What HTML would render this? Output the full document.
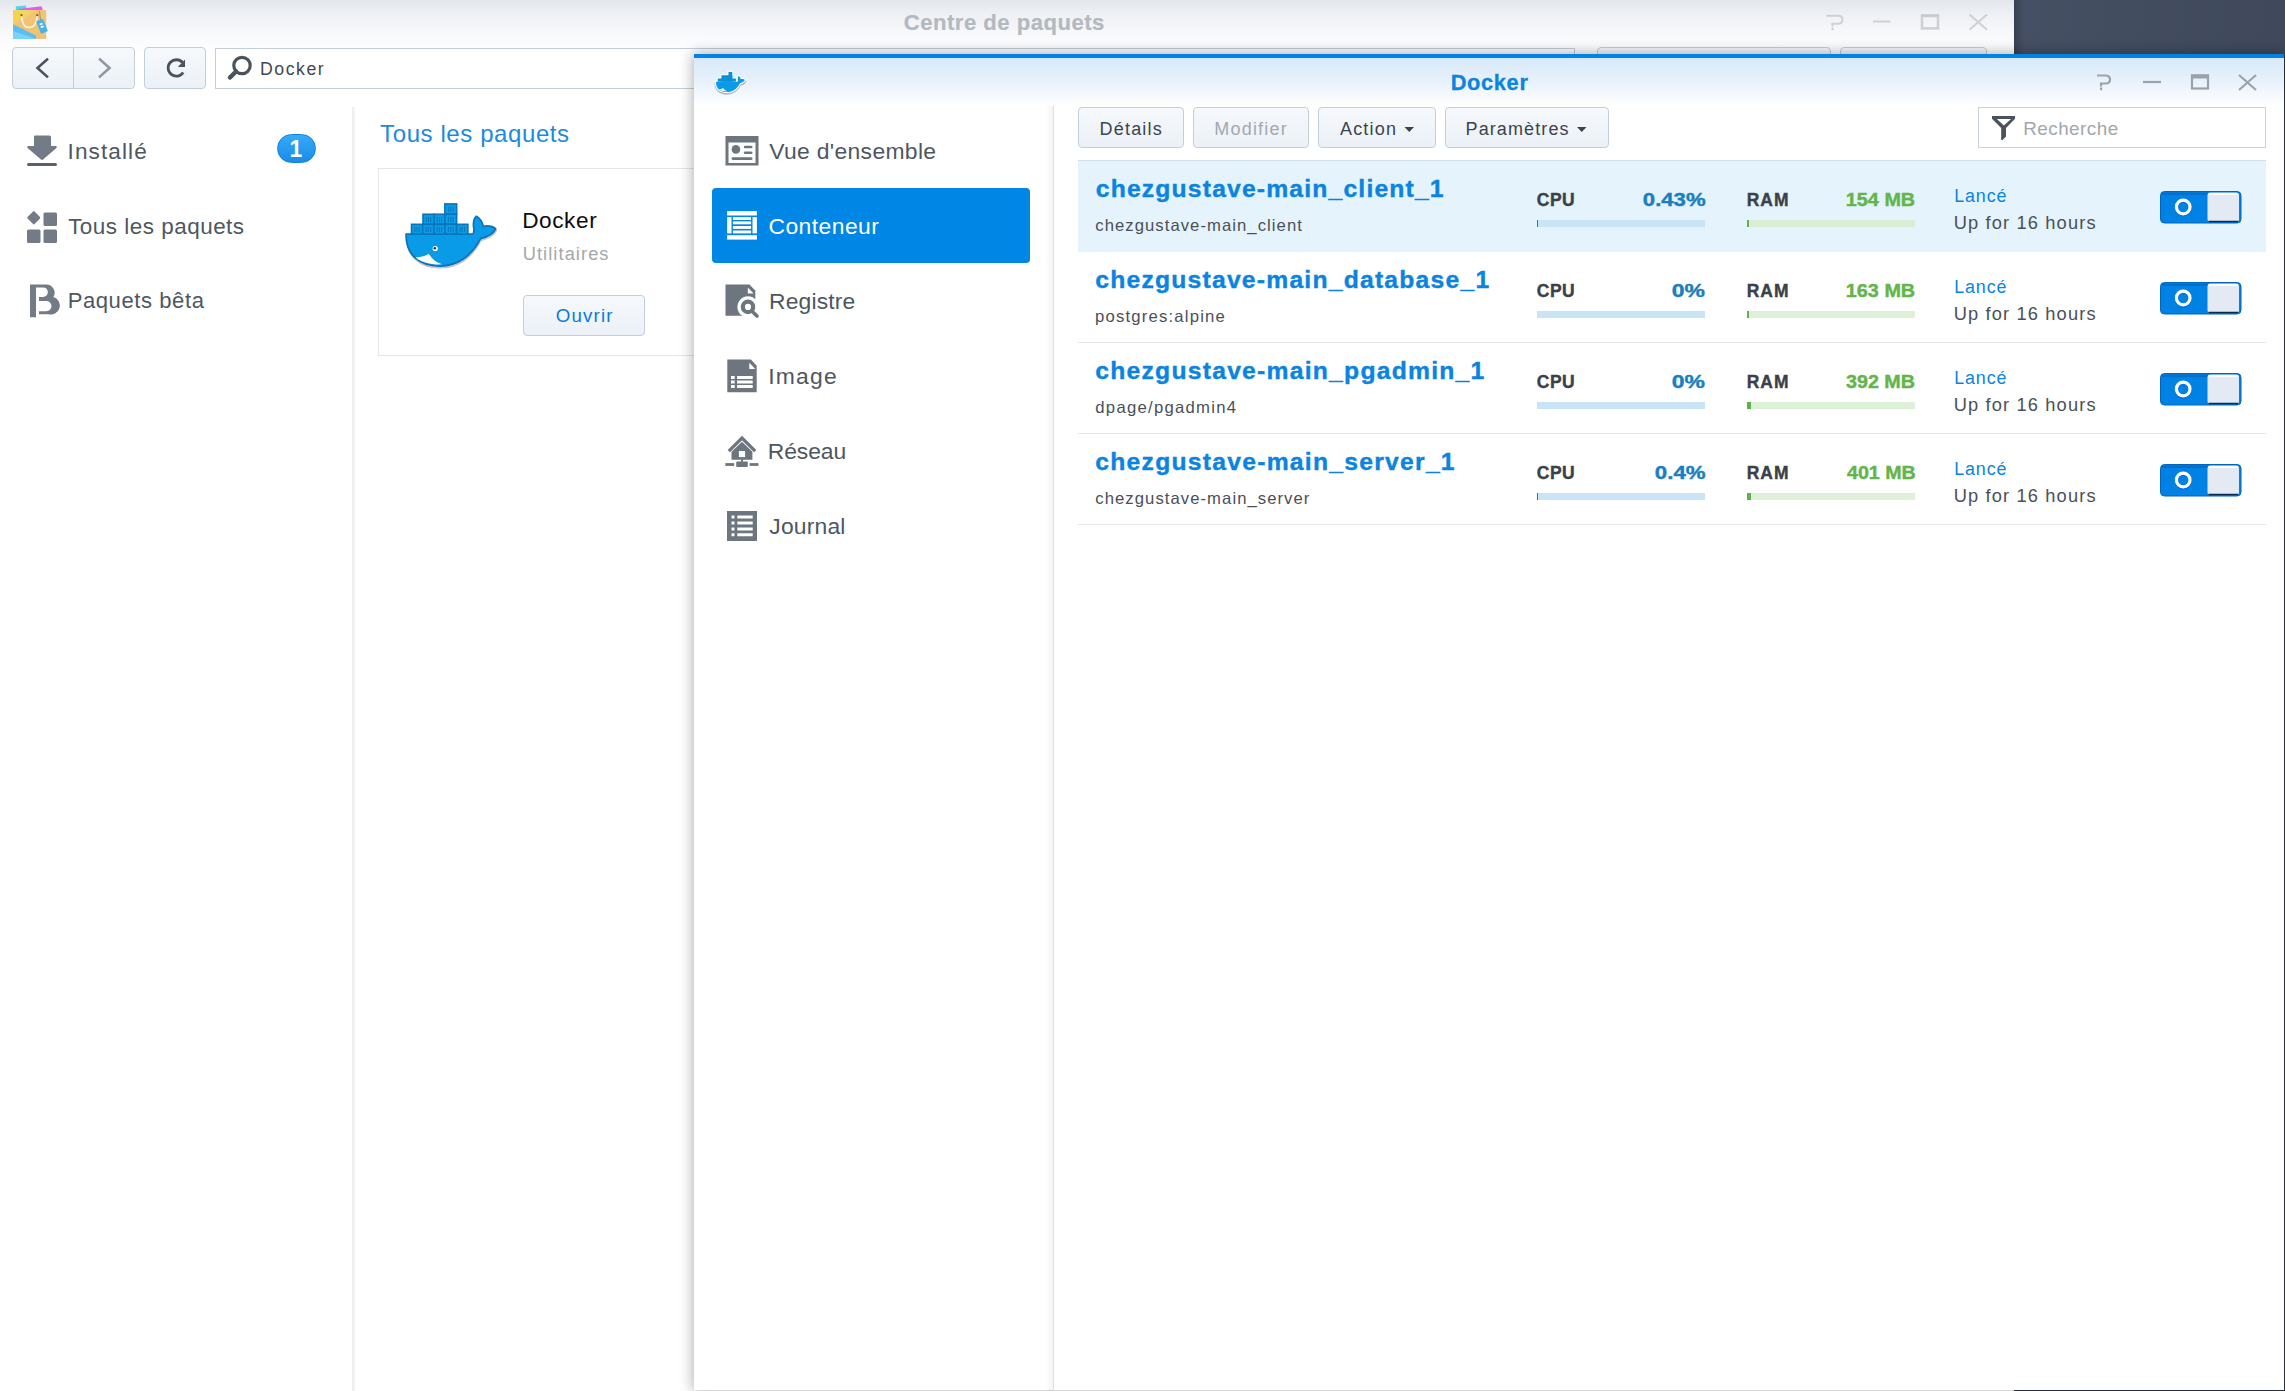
<!DOCTYPE html>
<html><head><meta charset="utf-8">
<style>
html,body{margin:0;padding:0;}
body{width:2285px;height:1391px;overflow:hidden;position:relative;background:#fff;font-family:"Liberation Sans",sans-serif;}
.a{position:absolute;}
.t{position:absolute;white-space:nowrap;line-height:1;}
.btn{position:absolute;box-sizing:border-box;border:1px solid #c3ced9;border-radius:4px;background:linear-gradient(#f6f9fc,#ebf1f7);}
svg{position:absolute;overflow:visible;}
</style></head><body>
<!-- ===== Background window: Centre de paquets ===== -->
<div class="a" style="left:0;top:0;width:2014px;height:56px;background:linear-gradient(#e3e7ec 0px,#eef0f4 14px,#f8f9fb 34px,#fdfdfe 46px,#fff 56px);"></div>
<div class="a" style="left:2014px;top:0;width:271px;height:54px;background:linear-gradient(90deg,#384150 0px,#465064 10px,#434d60 40%,#3f495b 100%);"></div>
<!-- app icon -->
<svg style="left:0;top:0" width="60" height="45" viewBox="0 0 60 45">
 <path d="M15.8 6.2 L26 5.6 L27 10.5 L15.8 10.8 Z" fill="#4fd6f2"/>
 <path d="M18.4 8.9 L41.5 6.3 L43 10.5 L18.4 11.2 Z" fill="#e25cf2"/>
 <rect x="13.1" y="10" width="33.1" height="28.9" rx="1.5" fill="#f0c375"/>
 <path d="M13.1 10 H30 L13.1 25 Z" fill="#f4d34f"/>
 <path d="M20 10 H36 L22 21 Z" fill="#f6d866" opacity="0.6"/>
 <path d="M13.1 24.2 L36 35.5 L36 38.9 H13.1 Z" fill="#5bbdf0"/>
 <path d="M13.1 31 L36 38.9 H13.1 Z" fill="#7cd2f6"/>
 <path d="M36 33 L46.2 36 V38.9 H36 Z" fill="#ecc27e"/>
 <path d="M21.5 15.2 Q22 27.5 29 27.5 Q36.5 27.5 37.3 15.2" stroke="#fbf3df" stroke-width="1.5" fill="none"/>
 <circle cx="21.5" cy="15.2" r="1.1" fill="#6d5a45"/><circle cx="37.2" cy="15.2" r="1.1" fill="#6d5a45"/>
 <path d="M39.5 11 L40.5 20" stroke="#8a7a60" stroke-width="0.7"/>
 <g transform="rotate(-22 42 26.3)"><rect x="38.3" y="19.5" width="7.4" height="13.6" rx="1" fill="#48b4ea"/><rect x="40.5" y="23" width="3" height="1.6" fill="#fff"/><rect x="40.5" y="26" width="3" height="1.6" fill="#fff"/></g>
</svg>
<div class="t" style="display:none"></div>
<!-- window controls bg -->
<svg style="left:1820px;top:10px" width="180" height="24" viewBox="0 0 180 24">
 <g fill="none" stroke="#cdd1d6" stroke-width="2">
  <path d="M6.5 5.7 H18 Q22.5 5.7 22.5 9.8 Q22.5 13.8 18 13.8 H12.5 V16.5"/>
  <path d="M53 11.5 H70.5"/>
  <rect x="102" y="6" width="16" height="12.4" stroke-width="2.6"/>
  <path d="M149.5 4.5 L167 19.8 M167 4.5 L149.5 19.8"/>
 </g>
 <rect x="11.5" y="17.5" width="2.2" height="2.7" fill="#cdd1d6"/>
 <rect x="101" y="4.2" width="18" height="2.3" fill="#c6cbd0"/>
</svg>
<!-- nav buttons -->
<div class="btn" style="left:12px;top:47px;width:123px;height:42px;"></div>
<div class="a" style="left:73px;top:48px;width:1px;height:40px;background:#c3ced9;"></div>
<div class="btn" style="left:144px;top:47px;width:62px;height:42px;"></div>
<svg style="left:0;top:40px" width="220" height="60" viewBox="0 0 220 60">
 <path d="M47 19.5 L37.5 28 L47 36.5" fill="none" stroke="#4a535c" stroke-width="2.6" stroke-linecap="square"/>
 <path d="M100 19.5 L109.5 28 L100 36.5" fill="none" stroke="#8e979f" stroke-width="2.6" stroke-linecap="square"/>
 <path d="M182.5 22.5 A8.2 8.2 0 1 0 183.2 32.5" fill="none" stroke="#4a535c" stroke-width="2.8"/>
 <path d="M185 19.5 L185 27 L177.8 27 Z" fill="#4a535c"/>
</svg>
<!-- search field -->
<div class="a" style="left:215px;top:48px;width:1360px;height:41px;box-sizing:border-box;border:1px solid #c3ced9;background:#fff;"></div>
<svg style="left:210px;top:40px" width="60" height="60" viewBox="0 0 60 60">
 <circle cx="32" cy="25.5" r="8.2" fill="none" stroke="#4a535c" stroke-width="3.2"/>
 <path d="M26 31.5 L20 37.5" stroke="#4a535c" stroke-width="4.5" stroke-linecap="round"/>
</svg>
<!-- hidden toolbar buttons (tops visible) -->
<div class="btn" style="left:1597px;top:47px;width:234px;height:42px;"></div>
<div class="btn" style="left:1840px;top:47px;width:147px;height:42px;"></div>
<!-- sidebar icons -->
<svg style="left:20px;top:125px" width="45" height="200" viewBox="0 0 45 200">
 <g fill="#737c86">
  <path d="M14 11.5 Q14 10.5 15 10.5 L29.5 10.5 Q31 10.5 31 12 L31 21 L36 21 Q37.5 21.5 36.5 23 L23 34.5 Q22 35.3 21 34.5 L7.5 23 Q6.5 21.5 8 21 L14 21 Z"/>
  <rect x="7" y="38" width="30" height="3" rx="1.5" fill="#59616b"/>
  <path d="M13.3 86.2 Q13.8 85.7 14.3 86.2 L20 92 Q20.6 92.7 20 93.4 L14.3 99.2 Q13.8 99.7 13.3 99.2 L7.5 93.4 Q6.9 92.7 7.5 92 Z"/>
  <rect x="23.5" y="87.5" width="13.5" height="13.5" rx="1.5"/>
  <rect x="7" y="104.5" width="13.5" height="13.5" rx="1.5"/>
  <rect x="23.5" y="104.5" width="13.5" height="13.5" rx="1.5"/>
  <path fill-rule="evenodd" d="M10 159.6 H25.8 A8.2 8.2 0 0 1 33.4 172 A8.75 8.75 0 0 1 28.25 189.2 H19 V186.2 H26.4 A5.1 5.1 0 0 0 26.4 176 H19 V172 H16 V192.3 H10 Z M16 162.4 V172 H23.05 A4.8 4.8 0 0 0 23.05 162.4 Z"/>
 </g>
</svg>
<div class="a" style="left:277px;top:134px;width:39px;height:29px;box-sizing:border-box;border:1px solid #1282de;border-radius:15px;background:linear-gradient(#37a9f8,#1a8ce7);"></div>
<div class="t" style="left:276.5px;width:39px;text-align:center;top:136px;line-height:26px;font-size:23px;font-weight:bold;color:#fff;">1</div>
<!-- divider -->
<div class="a" style="left:352px;top:107px;width:3px;height:1284px;background:linear-gradient(90deg,#e9ebed,#f6f7f8);"></div>
<!-- card -->
<div class="a" style="left:378px;top:168px;width:330px;height:188px;box-sizing:border-box;border:1px solid #e3e7eb;background:#fff;"></div>
<svg id="whale1" style="left:400px;top:195px" width="100" height="80" viewBox="0 0 1739 1391">
 <path d="M105,680 L1250,680 C1300,670 1290,620 1280,560 C1270,470 1290,400 1330,370 C1400,420 1440,490 1445,545 C1530,530 1620,550 1665,590 C1610,700 1480,740 1400,760 C1250,1060 1000,1230 700,1235 C350,1240 100,1050 105,680 Z" transform="translate(8,30)" fill="#000" opacity="0.22" stroke="#000" stroke-width="30"/>
 <g filter="">
 <path d="M105,680 L1250,680 C1300,670 1290,620 1280,560 C1270,470 1290,400 1330,370 C1400,420 1440,490 1445,545 C1530,530 1620,550 1665,590 C1610,700 1480,740 1400,760 C1250,1060 1000,1230 700,1235 C350,1240 100,1050 105,680 Z" fill="#0a9be8" stroke="#0b74b8" stroke-width="30" stroke-linejoin="round"/>
 <path d="M270,1085 C380,1080 460,1060 500,1020 C560,1120 640,1180 730,1205 C560,1215 380,1175 270,1085 Z" fill="#fff"/>
 <circle cx="612" cy="930" r="45" fill="#fff"/><circle cx="605" cy="925" r="22" fill="#333"/>
 <g fill="#0a9be8" stroke="#0b74b8" stroke-width="28">
  <rect x="780" y="155" width="205" height="178"/>
  <rect x="400" y="335" width="190" height="172"/><rect x="590" y="335" width="190" height="172"/><rect x="780" y="335" width="205" height="172"/>
  <rect x="200" y="510" width="195" height="170"/><rect x="395" y="510" width="195" height="170"/><rect x="590" y="510" width="190" height="170"/><rect x="780" y="510" width="205" height="170"/><rect x="985" y="510" width="195" height="170"/>
 </g>
 <path d="M842 205V294M882 205V294M924 205V294M457 383V469M495 383V469M533 383V469M647 383V469M685 383V469M723 383V469M842 383V469M882 383V469M924 383V469M258 558V643M298 558V643M336 558V643M454 558V643M492 558V643M532 558V643M647 558V643M685 558V643M723 558V643M842 558V643M882 558V643M924 558V643M1044 558V643M1082 558V643M1122 558V643" stroke="#0b6aa8" stroke-width="18" opacity="0.75"/>
 </g>
</svg>
<div class="btn" style="left:523px;top:295px;width:122px;height:41px;"></div>

<!-- ===== Docker window ===== -->
<div class="a" style="left:2014px;top:1390px;width:271px;height:1px;background:#2f3846;"></div>
<div class="a" style="left:2284px;top:54px;width:1px;height:1337px;background:#2f3846;"></div>
<div class="a" style="left:694px;top:54px;width:1590px;height:1336px;background:#fff;box-shadow:0 0 13px 1px rgba(0,0,0,0.32);"></div>
<div class="a" style="left:694px;top:54px;width:1590px;height:4px;background:#0082e6;"></div>
<div class="a" style="left:694px;top:58px;width:1590px;height:48px;background:linear-gradient(#d7e9f9,#e6f1fb 45%,#fafcfe 90%,#fff);"></div>
<svg style="left:713.5px;top:68.7px" width="32.3" height="25.9" viewBox="0 0 1739 1391">
 <path d="M105,680 L1250,680 C1300,670 1290,620 1280,560 C1270,470 1290,400 1330,370 C1400,420 1440,490 1445,545 C1530,530 1620,550 1665,590 C1610,700 1480,740 1400,760 C1250,1060 1000,1230 700,1235 C350,1240 100,1050 105,680 Z" transform="translate(0,70)" fill="#000" opacity="0.25" stroke="#000" stroke-width="150" stroke-linejoin="round"/>
 <path d="M105,680 L1250,680 C1300,670 1290,620 1280,560 C1270,470 1290,400 1330,370 C1400,420 1440,490 1445,545 C1530,530 1620,550 1665,590 C1610,700 1480,740 1400,760 C1250,1060 1000,1230 700,1235 C350,1240 100,1050 105,680 Z" fill="#fff" stroke="#fff" stroke-width="120" stroke-linejoin="round"/>
 <g fill="#fff" stroke="#fff" stroke-width="120"><rect x="780" y="155" width="205" height="520"/><rect x="400" y="335" width="585" height="340"/><rect x="200" y="510" width="980" height="170"/></g>
 <path d="M105,680 L1250,680 C1300,670 1290,620 1280,560 C1270,470 1290,400 1330,370 C1400,420 1440,490 1445,545 C1530,530 1620,550 1665,590 C1610,700 1480,740 1400,760 C1250,1060 1000,1230 700,1235 C350,1240 100,1050 105,680 Z" fill="#0a9be8"/>
 <path d="M270,1085 C380,1080 460,1060 500,1020 C560,1120 640,1180 730,1205 C560,1215 380,1175 270,1085 Z" fill="#fff"/>
 <g fill="#0a8fd8"><rect x="780" y="155" width="205" height="525"/><rect x="400" y="335" width="585" height="345"/><rect x="200" y="510" width="980" height="170"/></g>
</svg>
<!-- window controls docker -->
<svg style="left:2090px;top:68px" width="180" height="28" viewBox="0 0 180 28">
 <g fill="none" stroke="#9aa3ab" stroke-width="2.2">
  <path d="M7 7.5 H15.5 Q20 7.5 20 11.5 Q20 15.5 15.5 15.5 H11 V18.5"/>
  <path d="M53 14 H71"/>
  <rect x="102" y="7.5" width="16" height="13"/>
  <path d="M149 7 L166 22 M166 7 L149 22"/>
 </g>
 <rect x="10" y="19.5" width="2.2" height="2.8" fill="#9aa3ab"/>
 <rect x="101" y="6.5" width="18" height="4" fill="#9aa3ab"/>
</svg>
<!-- docker sidebar -->
<div class="a" style="left:1045px;top:106px;width:8px;height:1285px;background:linear-gradient(90deg,rgba(0,0,0,0),rgba(0,0,0,0.045));"></div><div class="a" style="left:1053px;top:106px;width:1px;height:1285px;background:#dde1e5;"></div>
<div class="a" style="left:712px;top:188px;width:318px;height:75px;border-radius:4px;background:#0086e4;"></div>
<svg style="left:715px;top:125px" width="60" height="430" viewBox="0 0 60 430">
 <g fill="#6d757e">
  <!-- vue d'ensemble -->
  <path fill-rule="evenodd" d="M10.5 11 H43.5 V40.5 H10.5 Z M13.5 17.5 V38 H40.5 V17.5 Z"/>
  <circle cx="20.9" cy="24.4" r="4.3"/>
  <rect x="28.8" y="20.7" width="8.7" height="2.6" rx="1.3"/>
  <rect x="28.8" y="26.4" width="8.7" height="2.6" rx="1.3"/>
  <rect x="16.5" y="32.3" width="21" height="2.6" rx="1.3"/>
  <!-- registre -->
  <path d="M10.5 159.5 H34.4 L40.3 165.4 V190.7 H10.5 Z"/>
  <path d="M32.8 162.4 L38.6 168.6 H32.8 Z" fill="#fff"/>
  <circle cx="33" cy="181.9" r="10.6" fill="#fff"/>
  <circle cx="33" cy="181.9" r="5.2" fill="none" stroke="#6d757e" stroke-width="4.2"/>
  <path d="M36.8 186 L42 191" stroke="#6d757e" stroke-width="3.6" stroke-linecap="round"/>
  <!-- image -->
  <path fill-rule="evenodd" d="M12.3 234.5 H35.9 L41.7 240.8 V267.3 H12.3 Z M16 251 V253.9 H19.7 V251 Z M22.1 251 V253.9 H37.7 V251 Z M16 255.5 V258.4 H19.7 V255.5 Z M22.1 255.5 V258.4 H37.7 V255.5 Z M16 260 V262.9 H19.7 V260 Z M22.1 260 V262.9 H37.7 V260 Z"/>
  <path d="M34.3 237.7 L40.3 243.9 H34.3 Z" fill="#fff"/>
  <!-- reseau -->
  <path d="M13.8 326.2 L27 313 L40.2 326.2" fill="none" stroke="#6d757e" stroke-width="3.2" stroke-linejoin="miter"/>
  <path d="M27 316.7 L37.4 326.8 V334.7 H16.5 V326.8 Z"/>
  <rect x="23.9" y="326" width="6.2" height="6.1" fill="#fff"/>
  <rect x="26" y="334.5" width="2" height="2.3"/>
  <rect x="21.2" y="336.5" width="11.6" height="5.6" rx="1"/>
  <rect x="10.3" y="338.1" width="8.9" height="2.8"/><rect x="34.6" y="338.1" width="8.9" height="2.8"/>
  <!-- journal -->
  <path fill-rule="evenodd" d="M12 386 H42 V416 H12 Z M16.5 390.5 V393.5 H19.5 V390.5 Z M22.3 390.5 V393.5 H37.7 V390.5 Z M16.5 396.5 V399.5 H19.5 V396.5 Z M22.3 396.5 V399.5 H37.7 V396.5 Z M16.5 402.5 V405.5 H19.5 V402.5 Z M22.3 402.5 V405.5 H37.7 V402.5 Z M16.5 408.3 V411.3 H19.5 V408.3 Z M22.3 408.3 V411.3 H37.7 V408.3 Z"/>
 </g>
 <!-- conteneur (white) -->
 <g fill="#fff">
  <rect x="12.1" y="86.1" width="29.8" height="4.4"/>
  <rect x="12.1" y="110.2" width="29.8" height="4.4"/>
  <rect x="12.1" y="92.1" width="4.4" height="16.3"/>
  <rect x="37.5" y="92.1" width="4.4" height="16.3"/>
  <rect x="17.9" y="92.1" width="18.2" height="2.9"/>
  <rect x="17.9" y="96.4" width="18.2" height="2.9"/>
  <rect x="17.9" y="101" width="18.2" height="2.9"/>
  <rect x="17.9" y="105.5" width="18.2" height="2.9"/>
 </g>
</svg>
<!-- toolbar -->
<div class="btn" style="left:1078px;top:107px;width:106px;height:41px;"></div>
<div class="btn" style="left:1193px;top:107px;width:116px;height:41px;"></div>
<div class="btn" style="left:1318px;top:107px;width:118px;height:41px;"></div>
<div class="btn" style="left:1445px;top:107px;width:164px;height:41px;"></div>
<svg style="left:1400px;top:120px" width="200" height="20" viewBox="0 0 200 20">
 <path d="M4.5 7 H14 L9.25 12 Z" fill="#3b444d"/>
 <path d="M177 7 H186.5 L181.75 12 Z" fill="#3b444d"/>
</svg>
<div class="a" style="left:1978px;top:107px;width:288px;height:41px;box-sizing:border-box;border:1px solid #c9d3dc;background:#fff;"></div>
<svg style="left:1985px;top:110px" width="30" height="35" viewBox="0 0 30 35">
 <path fill-rule="evenodd" d="M7 6 H30 V8.8 L21 18 V26.5 L17.5 30 H16.2 V18 L7 8.8 Z M11.8 9 H26 L18.9 15.5 Z" fill="#4a535c"/>
</svg>
<!-- rows -->
<div class="a" style="left:1078px;top:160px;width:1188px;height:1px;background:#d5dde6;"></div>
<div class="a" style="left:1078px;top:161px;width:1188px;height:91px;background:#e5f3fd;"></div>
<div class="a" style="left:1078px;top:342px;width:1188px;height:1px;background:#e5e9ee;"></div>
<div class="a" style="left:1078px;top:433px;width:1188px;height:1px;background:#e5e9ee;"></div>
<div class="a" style="left:1078px;top:524px;width:1188px;height:1px;background:#e5e9ee;"></div>
<!-- bars -->
<div class="a" style="left:1537px;top:220px;width:168px;height:7px;background:#c9e3f7;"></div>
<div class="a" style="left:1537px;top:220px;width:1px;height:7px;background:#1b7fbf;"></div>
<div class="a" style="left:1747px;top:220px;width:168px;height:7px;background:#dbeed5;"></div>
<div class="a" style="left:1747px;top:220px;width:2px;height:7px;background:#5cb34a;"></div>
<div class="a" style="left:1537px;top:311px;width:168px;height:7px;background:#c9e3f7;"></div>
<div class="a" style="left:1747px;top:311px;width:168px;height:7px;background:#dff0d9;"></div>
<div class="a" style="left:1747px;top:311px;width:2px;height:7px;background:#5cb34a;"></div>
<div class="a" style="left:1537px;top:402px;width:168px;height:7px;background:#c9e3f7;"></div>
<div class="a" style="left:1747px;top:402px;width:168px;height:7px;background:#dff0d9;"></div>
<div class="a" style="left:1747px;top:402px;width:4px;height:7px;background:#5cb34a;"></div>
<div class="a" style="left:1537px;top:493px;width:168px;height:7px;background:#c9e3f7;"></div>
<div class="a" style="left:1537px;top:493px;width:1px;height:7px;background:#1b7fbf;"></div>
<div class="a" style="left:1747px;top:493px;width:168px;height:7px;background:#dff0d9;"></div>
<div class="a" style="left:1747px;top:493px;width:4px;height:7px;background:#5cb34a;"></div>
<!-- toggles -->
<svg style="left:2160px;top:191px" width="82" height="33" viewBox="0 0 82 33"><rect x="0.5" y="0.5" width="80.5" height="31.5" rx="4" fill="#0082e4" stroke="#0066bf"/><path d="M2 3 Q2 1.5 4 1.5 H48 V4 H2 Z" fill="#0068c4" opacity="0.7"/><circle cx="23.2" cy="17" r="6.8" fill="none" stroke="#0a4fd8" stroke-width="3.2" opacity="0.5"/><circle cx="23.2" cy="16" r="6.8" fill="none" stroke="#fff" stroke-width="3.2"/><rect x="47.5" y="1.5" width="31.5" height="29.5" rx="3" fill="#e3eaf3"/><path d="M48.5 3 H78" stroke="#fff" stroke-width="2"/><path d="M48.5 30.5 H78" stroke="#0a2a50" stroke-width="1.5"/></svg>
<svg style="left:2160px;top:282px" width="82" height="33" viewBox="0 0 82 33"><rect x="0.5" y="0.5" width="80.5" height="31.5" rx="4" fill="#0082e4" stroke="#0066bf"/><path d="M2 3 Q2 1.5 4 1.5 H48 V4 H2 Z" fill="#0068c4" opacity="0.7"/><circle cx="23.2" cy="17" r="6.8" fill="none" stroke="#0a4fd8" stroke-width="3.2" opacity="0.5"/><circle cx="23.2" cy="16" r="6.8" fill="none" stroke="#fff" stroke-width="3.2"/><rect x="47.5" y="1.5" width="31.5" height="29.5" rx="3" fill="#e3eaf3"/><path d="M48.5 3 H78" stroke="#fff" stroke-width="2"/><path d="M48.5 30.5 H78" stroke="#0a2a50" stroke-width="1.5"/></svg>
<svg style="left:2160px;top:373px" width="82" height="33" viewBox="0 0 82 33"><rect x="0.5" y="0.5" width="80.5" height="31.5" rx="4" fill="#0082e4" stroke="#0066bf"/><path d="M2 3 Q2 1.5 4 1.5 H48 V4 H2 Z" fill="#0068c4" opacity="0.7"/><circle cx="23.2" cy="17" r="6.8" fill="none" stroke="#0a4fd8" stroke-width="3.2" opacity="0.5"/><circle cx="23.2" cy="16" r="6.8" fill="none" stroke="#fff" stroke-width="3.2"/><rect x="47.5" y="1.5" width="31.5" height="29.5" rx="3" fill="#e3eaf3"/><path d="M48.5 3 H78" stroke="#fff" stroke-width="2"/><path d="M48.5 30.5 H78" stroke="#0a2a50" stroke-width="1.5"/></svg>
<svg style="left:2160px;top:464px" width="82" height="33" viewBox="0 0 82 33"><rect x="0.5" y="0.5" width="80.5" height="31.5" rx="4" fill="#0082e4" stroke="#0066bf"/><path d="M2 3 Q2 1.5 4 1.5 H48 V4 H2 Z" fill="#0068c4" opacity="0.7"/><circle cx="23.2" cy="17" r="6.8" fill="none" stroke="#0a4fd8" stroke-width="3.2" opacity="0.5"/><circle cx="23.2" cy="16" r="6.8" fill="none" stroke="#fff" stroke-width="3.2"/><rect x="47.5" y="1.5" width="31.5" height="29.5" rx="3" fill="#e3eaf3"/><path d="M48.5 3 H78" stroke="#fff" stroke-width="2"/><path d="M48.5 30.5 H78" stroke="#0a2a50" stroke-width="1.5"/></svg>
<div class="t" style="left:903.72px;top:10px;line-height:25px;font-size:22.09px;letter-spacing:0.503px;color:#b3b9c0;font-weight:bold;-webkit-text-stroke-width:0.2px;">Centre de paquets</div>
<div class="t" style="left:260.08px;top:59px;line-height:20px;font-size:17.72px;letter-spacing:1.503px;color:#3f4851;">Docker</div>
<div class="t" style="left:67.57px;top:139px;line-height:25px;font-size:22.60px;letter-spacing:1.090px;color:#4e5761;">Installé</div>
<div class="t" style="left:68.15px;top:214px;line-height:25px;font-size:22.47px;letter-spacing:0.488px;color:#4e5761;">Tous les paquets</div>
<div class="t" style="left:67.64px;top:288px;line-height:25px;font-size:22.05px;letter-spacing:0.577px;color:#4e5761;">Paquets bêta</div>
<div class="t" style="left:380.12px;top:120px;line-height:27px;font-size:24.00px;letter-spacing:0.592px;color:#1a8ae0;">Tous les paquets</div>
<div class="t" style="left:522.19px;top:208px;line-height:25px;font-size:22.60px;letter-spacing:0.581px;color:#0d0d0d;">Docker</div>
<div class="t" style="left:522.72px;top:243px;line-height:21px;font-size:18.28px;letter-spacing:1.067px;color:#a3a8ad;">Utilitaires</div>
<div class="t" style="left:555.85px;top:305px;line-height:21px;font-size:18.70px;letter-spacing:1.159px;color:#0a7bd6;">Ouvrir</div>
<div class="t" style="left:1450.69px;top:70px;line-height:25px;font-size:21.80px;letter-spacing:0.657px;color:#0a84e0;font-weight:bold;-webkit-text-stroke-width:0.3px;">Docker</div>
<div class="t" style="left:769.20px;top:138px;line-height:26px;font-size:22.88px;letter-spacing:0.337px;color:#4e5761;">Vue d&#39;ensemble</div>
<div class="t" style="left:768.46px;top:213px;line-height:26px;font-size:22.88px;letter-spacing:0.447px;color:#ffffff;">Conteneur</div>
<div class="t" style="left:768.97px;top:288px;line-height:26px;font-size:22.88px;letter-spacing:0.164px;color:#4e5761;">Registre</div>
<div class="t" style="left:768.14px;top:363px;line-height:26px;font-size:22.88px;letter-spacing:1.272px;color:#4e5761;">Image</div>
<div class="t" style="left:767.77px;top:438px;line-height:26px;font-size:22.88px;letter-spacing:-0.086px;color:#4e5761;">Réseau</div>
<div class="t" style="left:769.37px;top:513px;line-height:26px;font-size:22.88px;letter-spacing:0.166px;color:#4e5761;">Journal</div>
<div class="t" style="left:1099.56px;top:119px;line-height:20px;font-size:18.00px;letter-spacing:1.193px;color:#3b444d;">Détails</div>
<div class="t" style="left:1214.16px;top:119px;line-height:20px;font-size:18.00px;letter-spacing:1.236px;color:#a2a9b1;">Modifier</div>
<div class="t" style="left:1340.00px;top:119px;line-height:20px;font-size:18.00px;letter-spacing:1.177px;color:#3b444d;">Action</div>
<div class="t" style="left:1465.56px;top:119px;line-height:20px;font-size:18.00px;letter-spacing:1.105px;color:#3b444d;">Paramètres</div>
<div class="t" style="left:2023.19px;top:118px;line-height:21px;font-size:18.84px;letter-spacing:0.487px;color:#a1a7ae;">Recherche</div>
<div class="t" style="left:1095.76px;top:175px;line-height:27px;font-size:24.69px;letter-spacing:1.173px;color:#0a84e0;font-weight:bold;-webkit-text-stroke-width:0.4px;">chezgustave-main_client_1</div>
<div class="t" style="left:1095.33px;top:216px;line-height:19px;font-size:16.68px;letter-spacing:1.046px;color:#4a5058;">chezgustave-main_client</div>
<div class="t" style="left:1536.80px;top:190px;line-height:20px;font-size:17.44px;letter-spacing:0.541px;color:#3a414a;font-weight:bold;-webkit-text-stroke-width:0.4px;">CPU</div>
<div class="t" style="left:1642.88px;top:190px;line-height:20px;font-size:17.44px;letter-spacing:0.000px;color:#1b7fbf;font-weight:bold;-webkit-text-stroke-width:0.4px;transform:scaleX(1.2675);transform-origin:0.52px 0;">0.43%</div>
<div class="t" style="left:1746.65px;top:190px;line-height:20px;font-size:17.44px;letter-spacing:1.062px;color:#3a414a;font-weight:bold;-webkit-text-stroke-width:0.4px;">RAM</div>
<div class="t" style="left:1846.35px;top:190px;line-height:20px;font-size:17.44px;letter-spacing:0.000px;color:#63b54b;font-weight:bold;-webkit-text-stroke-width:0.4px;transform:scaleX(1.1351);transform-origin:1.05px 0;">154 MB</div>
<div class="t" style="left:1954.17px;top:186px;line-height:20px;font-size:17.86px;letter-spacing:0.903px;color:#0a84e0;">Lancé</div>
<div class="t" style="left:1953.72px;top:212px;line-height:21px;font-size:18.28px;letter-spacing:1.138px;color:#4a5058;">Up for 16 hours</div>
<div class="t" style="left:1095.26px;top:266px;line-height:27px;font-size:24.69px;letter-spacing:1.216px;color:#0a84e0;font-weight:bold;-webkit-text-stroke-width:0.4px;">chezgustave-main_database_1</div>
<div class="t" style="left:1095.00px;top:307px;line-height:19px;font-size:16.68px;letter-spacing:1.196px;color:#4a5058;">postgres:alpine</div>
<div class="t" style="left:1536.80px;top:281px;line-height:20px;font-size:17.44px;letter-spacing:0.541px;color:#3a414a;font-weight:bold;-webkit-text-stroke-width:0.4px;">CPU</div>
<div class="t" style="left:1672.48px;top:281px;line-height:20px;font-size:17.44px;letter-spacing:0.000px;color:#1b7fbf;font-weight:bold;-webkit-text-stroke-width:0.4px;transform:scaleX(1.3141);transform-origin:0.52px 0;">0%</div>
<div class="t" style="left:1746.65px;top:281px;line-height:20px;font-size:17.44px;letter-spacing:1.062px;color:#3a414a;font-weight:bold;-webkit-text-stroke-width:0.4px;">RAM</div>
<div class="t" style="left:1846.25px;top:281px;line-height:20px;font-size:17.44px;letter-spacing:0.000px;color:#63b54b;font-weight:bold;-webkit-text-stroke-width:0.4px;transform:scaleX(1.1351);transform-origin:1.05px 0;">163 MB</div>
<div class="t" style="left:1954.17px;top:277px;line-height:20px;font-size:17.86px;letter-spacing:0.903px;color:#0a84e0;">Lancé</div>
<div class="t" style="left:1953.72px;top:303px;line-height:21px;font-size:18.28px;letter-spacing:1.138px;color:#4a5058;">Up for 16 hours</div>
<div class="t" style="left:1095.26px;top:357px;line-height:27px;font-size:24.69px;letter-spacing:1.239px;color:#0a84e0;font-weight:bold;-webkit-text-stroke-width:0.4px;">chezgustave-main_pgadmin_1</div>
<div class="t" style="left:1095.33px;top:398px;line-height:19px;font-size:16.68px;letter-spacing:1.261px;color:#4a5058;">dpage/pgadmin4</div>
<div class="t" style="left:1536.80px;top:372px;line-height:20px;font-size:17.44px;letter-spacing:0.541px;color:#3a414a;font-weight:bold;-webkit-text-stroke-width:0.4px;">CPU</div>
<div class="t" style="left:1672.48px;top:372px;line-height:20px;font-size:17.44px;letter-spacing:0.000px;color:#1b7fbf;font-weight:bold;-webkit-text-stroke-width:0.4px;transform:scaleX(1.3141);transform-origin:0.52px 0;">0%</div>
<div class="t" style="left:1746.65px;top:372px;line-height:20px;font-size:17.44px;letter-spacing:1.062px;color:#3a414a;font-weight:bold;-webkit-text-stroke-width:0.4px;">RAM</div>
<div class="t" style="left:1846.45px;top:372px;line-height:20px;font-size:17.44px;letter-spacing:0.000px;color:#63b54b;font-weight:bold;-webkit-text-stroke-width:0.4px;transform:scaleX(1.1302);transform-origin:0.35px 0;">392 MB</div>
<div class="t" style="left:1954.17px;top:368px;line-height:20px;font-size:17.86px;letter-spacing:0.903px;color:#0a84e0;">Lancé</div>
<div class="t" style="left:1953.72px;top:394px;line-height:21px;font-size:18.28px;letter-spacing:1.138px;color:#4a5058;">Up for 16 hours</div>
<div class="t" style="left:1095.26px;top:448px;line-height:27px;font-size:24.69px;letter-spacing:1.250px;color:#0a84e0;font-weight:bold;-webkit-text-stroke-width:0.4px;">chezgustave-main_server_1</div>
<div class="t" style="left:1095.33px;top:489px;line-height:19px;font-size:16.68px;letter-spacing:1.053px;color:#4a5058;">chezgustave-main_server</div>
<div class="t" style="left:1536.80px;top:463px;line-height:20px;font-size:17.44px;letter-spacing:0.541px;color:#3a414a;font-weight:bold;-webkit-text-stroke-width:0.4px;">CPU</div>
<div class="t" style="left:1654.88px;top:463px;line-height:20px;font-size:17.44px;letter-spacing:0.000px;color:#1b7fbf;font-weight:bold;-webkit-text-stroke-width:0.4px;transform:scaleX(1.2751);transform-origin:0.52px 0;">0.4%</div>
<div class="t" style="left:1746.65px;top:463px;line-height:20px;font-size:17.44px;letter-spacing:1.062px;color:#3a414a;font-weight:bold;-webkit-text-stroke-width:0.4px;">RAM</div>
<div class="t" style="left:1846.63px;top:463px;line-height:20px;font-size:17.44px;letter-spacing:0.000px;color:#63b54b;font-weight:bold;-webkit-text-stroke-width:0.4px;transform:scaleX(1.1270);transform-origin:0.17px 0;">401 MB</div>
<div class="t" style="left:1954.17px;top:459px;line-height:20px;font-size:17.86px;letter-spacing:0.903px;color:#0a84e0;">Lancé</div>
<div class="t" style="left:1953.72px;top:485px;line-height:21px;font-size:18.28px;letter-spacing:1.138px;color:#4a5058;">Up for 16 hours</div>

</body></html>
